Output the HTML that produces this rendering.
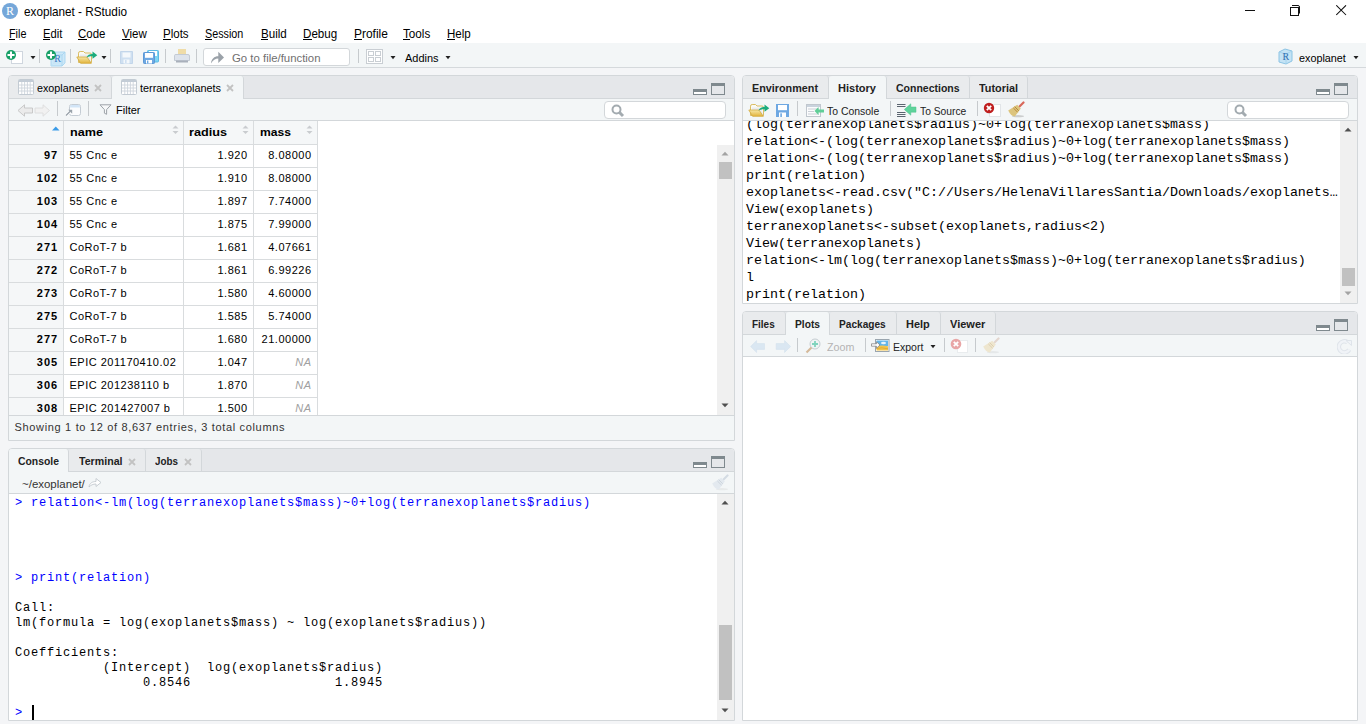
<!DOCTYPE html>
<html><head><meta charset="utf-8"><title>exoplanet - RStudio</title>
<style>
*{box-sizing:border-box}
html,body{margin:0;padding:0}
body{width:1366px;height:724px;position:relative;overflow:hidden;background:#f4f5f7;font-family:"Liberation Sans",sans-serif;font-size:12px;color:#000}
</style></head><body>

<div style="position:absolute;left:0px;top:0px;width:1366px;height:43px;background:#fff"></div>
<div style="position:absolute;left:2px;top:3px;width:16px;height:16px;background:#75a7d9;border-radius:50%"></div>
<div style="position:absolute;left:2px;top:3px;width:16px;height:16px;font-family:'Liberation Serif',serif;font-size:12px;line-height:16px;color:#fff;text-align:center">R</div>
<div style="position:absolute;top:2px;font-family:'Liberation Sans',sans-serif;font-size:13px;line-height:20px;white-space:pre;color:#000;left:24px;transform:scaleX(0.9021);transform-origin:left center;">exoplanet - RStudio</div>
<div style="position:absolute;left:1245px;top:10px;width:10px;height:1px;background:#111"></div>
<div style="position:absolute;left:1290px;top:7px;width:9px;height:9px;border:1px solid #111;width:9px;height:9px"></div>
<svg style="position:absolute;left:1292px;top:4px;" width="9" height="10" viewBox="0 0 9 10"><path d="M0 1.5H6Q7.5 1.5 7.5 3V9.5" fill="none" stroke="#111" stroke-width="1"/></svg>
<svg style="position:absolute;left:1336px;top:5px;" width="11" height="11" viewBox="0 0 11 11"><path d="M0.3 0.3L10 10M10 0.3L0.3 10" stroke="#111" stroke-width="1.05"/></svg>
<div style="position:absolute;top:24px;font-family:'Liberation Sans',sans-serif;font-size:12px;line-height:20px;white-space:pre;color:#000;left:8.6px;transform:scaleX(0.8999);transform-origin:left center;">File</div>
<div style="position:absolute;left:9px;top:39px;width:6px;height:1px;background:#000"></div>
<div style="position:absolute;top:24px;font-family:'Liberation Sans',sans-serif;font-size:12px;line-height:20px;white-space:pre;color:#000;left:42.6px;transform:scaleX(0.9382);transform-origin:left center;">Edit</div>
<div style="position:absolute;left:43px;top:39px;width:7px;height:1px;background:#000"></div>
<div style="position:absolute;top:24px;font-family:'Liberation Sans',sans-serif;font-size:12px;line-height:20px;white-space:pre;color:#000;left:78.3px;transform:scaleX(0.9551);transform-origin:left center;">Code</div>
<div style="position:absolute;left:78px;top:39px;width:9px;height:1px;background:#000"></div>
<div style="position:absolute;top:24px;font-family:'Liberation Sans',sans-serif;font-size:12px;line-height:20px;white-space:pre;color:#000;left:122.2px;transform:scaleX(0.9615);transform-origin:left center;">View</div>
<div style="position:absolute;left:122px;top:39px;width:8px;height:1px;background:#000"></div>
<div style="position:absolute;top:24px;font-family:'Liberation Sans',sans-serif;font-size:12px;line-height:20px;white-space:pre;color:#000;left:163.2px;transform:scaleX(0.9596);transform-origin:left center;">Plots</div>
<div style="position:absolute;left:163px;top:39px;width:8px;height:1px;background:#000"></div>
<div style="position:absolute;top:24px;font-family:'Liberation Sans',sans-serif;font-size:12px;line-height:20px;white-space:pre;color:#000;left:205px;transform:scaleX(0.8971);transform-origin:left center;">Session</div>
<div style="position:absolute;left:205px;top:39px;width:7px;height:1px;background:#000"></div>
<div style="position:absolute;top:24px;font-family:'Liberation Sans',sans-serif;font-size:12px;line-height:20px;white-space:pre;color:#000;left:260.6px;transform:scaleX(0.9669);transform-origin:left center;">Build</div>
<div style="position:absolute;left:261px;top:39px;width:7px;height:1px;background:#000"></div>
<div style="position:absolute;top:24px;font-family:'Liberation Sans',sans-serif;font-size:12px;line-height:20px;white-space:pre;color:#000;left:303.3px;transform:scaleX(0.9672);transform-origin:left center;">Debug</div>
<div style="position:absolute;left:303px;top:39px;width:9px;height:1px;background:#000"></div>
<div style="position:absolute;top:24px;font-family:'Liberation Sans',sans-serif;font-size:12px;line-height:20px;white-space:pre;color:#000;left:354px;transform:scaleX(0.9966);transform-origin:left center;">Profile</div>
<div style="position:absolute;left:354px;top:39px;width:8px;height:1px;background:#000"></div>
<div style="position:absolute;top:24px;font-family:'Liberation Sans',sans-serif;font-size:12px;line-height:20px;white-space:pre;color:#000;left:403.2px;transform:scaleX(0.9745);transform-origin:left center;">Tools</div>
<div style="position:absolute;left:403px;top:39px;width:7px;height:1px;background:#000"></div>
<div style="position:absolute;top:24px;font-family:'Liberation Sans',sans-serif;font-size:12px;line-height:20px;white-space:pre;color:#000;left:447px;transform:scaleX(0.9643);transform-origin:left center;">Help</div>
<div style="position:absolute;left:447px;top:39px;width:8px;height:1px;background:#000"></div>
<div style="position:absolute;left:0px;top:43px;width:1366px;height:25px;background:#f3f6f7;border-bottom:1px solid #d5d9dc"></div>
<div style="position:absolute;left:11px;top:51px;width:12px;height:13px;background:#fff;border:1px solid #cfd6de"></div>
<svg style="position:absolute;left:6px;top:50px;" width="10" height="10" viewBox="0 0 10 10"><circle cx="5" cy="5" r="5" fill="#17a067"/><path d="M4 1.5H6V4H8.5V6H6V8.5H4V6H1.5V4H4Z" fill="#fff"/></svg>
<svg style="position:absolute;left:30px;top:56px;" width="6" height="4" viewBox="0 0 6 4"><path d="M0.5 0H5.5L3 3.2Z" fill="#222"/></svg>
<div style="position:absolute;left:39px;top:49px;width:1px;height:14px;background:#c6cacd"></div>
<svg style="position:absolute;left:50px;top:51px;" width="16" height="16" viewBox="0 0 16 16"><path d="M1 4L4 1H15V12L12 15H1Z" fill="#cde8f8" stroke="#a6d5ef" stroke-width="0.9"/><path d="M1 4H12V15M12 4L15 1" fill="none" stroke="#a6d5ef" stroke-width="0.9"/><path d="M4 1V12H15M4 12L1 15" fill="none" stroke="#bfe2f5" stroke-width="0.6"/><text x="4.3" y="11.2" font-family="Liberation Serif" font-size="10" fill="#3a77c2">R</text></svg>
<svg style="position:absolute;left:46px;top:50px;" width="10" height="10" viewBox="0 0 10 10"><circle cx="5" cy="5" r="5" fill="#17a067"/><path d="M4 1.5H6V4H8.5V6H6V8.5H4V6H1.5V4H4Z" fill="#fff"/></svg>
<div style="position:absolute;left:70px;top:49px;width:1px;height:14px;background:#c6cacd"></div>
<svg style="position:absolute;left:76px;top:50px;" width="22" height="15" viewBox="0 0 22 15"><defs><linearGradient id="fg" x1="0" y1="0" x2="0" y2="1"><stop offset="0" stop-color="#f6e7a6"/><stop offset="1" stop-color="#e2b33b"/></linearGradient></defs><path d="M2.5 12.5V3.2Q2.5 1.5 4.2 1.5H7.5L9 3H14Q15.5 3 15.5 4.5V12.5Z" fill="#fbfaf3" stroke="#d6b652" stroke-width="0.9"/><path d="M4 4.5H13.5L15 12H4Z" fill="#e9ecef"/><path d="M0.8 7H11L15.3 13.3H4.6Z" fill="url(#fg)" stroke="#d3aa3c" stroke-width="0.8"/><path d="M10.5 7.5C11.5 5 13.5 4 16.5 4V1.5L21.3 5.2L16.5 8.8V6.3C14 6.3 12 6.8 10.5 7.5Z" fill="#1bab7b"/></svg>
<svg style="position:absolute;left:101px;top:56px;" width="6" height="4" viewBox="0 0 6 4"><path d="M0.5 0H5.5L3 3.2Z" fill="#222"/></svg>
<div style="position:absolute;left:110px;top:49px;width:1px;height:14px;background:#c6cacd"></div>
<svg style="position:absolute;left:120px;top:51px;" width="13" height="13" viewBox="0 0 13 13"><path d="M0.5 0.5H12.5V12.5H0.5Z" fill="#cfe0f1" stroke="#c3d6ea"/><rect x="2.5" y="1.5" width="8" height="5" fill="#f4f8fb"/><rect x="3.5" y="8.5" width="6" height="4" fill="#f4f8fb"/><rect x="5" y="9" width="1.6" height="3" fill="#cfe0f1"/></svg>
<svg style="position:absolute;left:143px;top:50px;" width="16" height="14" viewBox="0 0 16 14"><rect x="4.5" y="0.5" width="11" height="11.5" rx="0.8" fill="#7dd5f4" stroke="#5fb9e4"/><rect x="6" y="1" width="8" height="5" fill="#fff"/><rect x="0.5" y="2.5" width="11" height="11" rx="0.8" fill="#6ea8e2" stroke="#5c98d6"/><rect x="2" y="3" width="8" height="4.8" fill="#fff"/><rect x="3" y="10" width="6" height="3.5" fill="#fff"/><rect x="4" y="10.5" width="1.4" height="3" fill="#6ea8e2"/></svg>
<div style="position:absolute;left:165px;top:49px;width:1px;height:14px;background:#c6cacd"></div>
<svg style="position:absolute;left:173px;top:48px;" width="18" height="16" viewBox="0 0 18 16"><rect x="5" y="1" width="8" height="7" fill="#efdca8"/><path d="M1.5 7.5Q1.5 6.5 3 6.5H15Q16.5 6.5 16.5 8V12.5H1.5Z" fill="#dde3ec" stroke="#c3cad4"/><rect x="3" y="12.5" width="12" height="2" fill="#a9b0bb"/></svg>
<div style="position:absolute;left:196px;top:49px;width:1px;height:14px;background:#c6cacd"></div>
<div style="position:absolute;left:203px;top:48px;width:147px;height:18px;background:#fff;border:1px solid #d3d7da;border-radius:3px"></div>
<svg style="position:absolute;left:210px;top:51px;" width="15" height="13" viewBox="0 0 15 13"><path d="M1 12.5C1.3 8 4.3 5.3 8.3 5.3V0.8L14 6.4L8.3 12V7.6C5.3 7.6 3 9.3 1 12.5Z" fill="#9ba2a9"/></svg>
<div style="position:absolute;top:48px;font-family:'Liberation Sans',sans-serif;font-size:11px;line-height:20px;white-space:pre;color:#707070;left:232px;transform:scaleX(1.0338);transform-origin:left center;">Go to file/function</div>
<div style="position:absolute;left:358px;top:49px;width:1px;height:14px;background:#c6cacd"></div>
<svg style="position:absolute;left:366px;top:49px;" width="17" height="15" viewBox="0 0 17 15"><rect x="0.5" y="0.5" width="16" height="14" fill="#fff" stroke="#c9ced3"/><rect x="2.5" y="2.5" width="5" height="4" fill="none" stroke="#c9ced3"/><rect x="9.5" y="2.5" width="5" height="4" fill="none" stroke="#c9ced3"/><rect x="2.5" y="8.5" width="5" height="4" fill="none" stroke="#c9ced3"/><rect x="9.5" y="8.5" width="5" height="4" fill="none" stroke="#c9ced3"/></svg>
<svg style="position:absolute;left:390px;top:56px;" width="6" height="4" viewBox="0 0 6 4"><path d="M0.5 0H5.5L3 3.2Z" fill="#222"/></svg>
<div style="position:absolute;top:48px;font-family:'Liberation Sans',sans-serif;font-size:11px;line-height:20px;white-space:pre;color:#000;left:404.5px;transform:scaleX(0.9960);transform-origin:left center;">Addins</div>
<svg style="position:absolute;left:445px;top:56px;" width="6" height="4" viewBox="0 0 6 4"><path d="M0.5 0H5.5L3 3.2Z" fill="#222"/></svg>
<svg style="position:absolute;left:1277px;top:48px;" width="17" height="17" viewBox="0 0 17 17"><path d="M2 4L8 1L15 3V13L9 16L2 14Z" fill="#c4e3f5" stroke="#8cc4e4" stroke-width="1"/><path d="M2 4L9 6L15 3M9 6V16" fill="none" stroke="#9fd0ec" stroke-width="0.8"/><text x="5.5" y="12" font-family="Liberation Serif" font-size="10" fill="#2f6fb0">R</text></svg>
<div style="position:absolute;top:48px;font-family:'Liberation Sans',sans-serif;font-size:11px;line-height:20px;white-space:pre;color:#000;left:1298.6px;transform:scaleX(0.9810);transform-origin:left center;">exoplanet</div>
<svg style="position:absolute;left:1353px;top:56px;" width="6" height="4" viewBox="0 0 6 4"><path d="M0.5 0H5.5L3 3.2Z" fill="#222"/></svg>
<div style="position:absolute;left:8px;top:75px;width:727px;height:366px;background:#fff;border:1px solid #d3d7da;border-radius:4px 4px 0 0"></div>
<div style="position:absolute;left:9px;top:76px;width:725px;height:22px;background:#e5e7ea;border-radius:3px 3px 0 0"></div>
<div style="position:absolute;left:9px;top:98px;width:725px;height:1px;background:#d3d7da"></div>
<div style="position:absolute;left:9px;top:76px;width:103px;height:22px;background:#e9ebed;border-right:1px solid #d3d7da;border-radius:3px 3px 0 0"></div>
<div style="position:absolute;left:112px;top:76px;width:132px;height:23px;background:#f3f6f7;border-right:1px solid #d3d7da;border-radius:3px 3px 0 0"></div>
<svg style="position:absolute;left:18px;top:79px;" width="16" height="16" viewBox="0 0 16 16"><rect x="0.5" y="0.5" width="15" height="15" rx="1" fill="#fff" stroke="#c3cbd3"/><rect x="1" y="1" width="14" height="2" fill="#c3ccd6"/><path d="M3.8 3V15" stroke="#cdd4db" stroke-width="0.9"/><path d="M6.6 3V15" stroke="#cdd4db" stroke-width="0.9"/><path d="M9.4 3V15" stroke="#cdd4db" stroke-width="0.9"/><path d="M12.2 3V15" stroke="#cdd4db" stroke-width="0.9"/><path d="M1 6.0H15" stroke="#cdd4db" stroke-width="0.9"/><path d="M1 9.0H15" stroke="#cdd4db" stroke-width="0.9"/><path d="M1 12.0H15" stroke="#cdd4db" stroke-width="0.9"/></svg>
<div style="position:absolute;top:78px;font-family:'Liberation Sans',sans-serif;font-size:11px;line-height:20px;white-space:pre;color:#000;left:37px;transform:scaleX(0.9773);transform-origin:left center;">exoplanets</div>
<svg style="position:absolute;left:94px;top:84px;" width="8" height="8" viewBox="0 0 8 8"><path d="M1 1L7 7M7 1L1 7" stroke="#c2c2c2" stroke-width="1.8"/></svg>
<svg style="position:absolute;left:121px;top:79px;" width="16" height="16" viewBox="0 0 16 16"><rect x="0.5" y="0.5" width="15" height="15" rx="1" fill="#fff" stroke="#c3cbd3"/><rect x="1" y="1" width="14" height="2" fill="#c3ccd6"/><path d="M3.8 3V15" stroke="#cdd4db" stroke-width="0.9"/><path d="M6.6 3V15" stroke="#cdd4db" stroke-width="0.9"/><path d="M9.4 3V15" stroke="#cdd4db" stroke-width="0.9"/><path d="M12.2 3V15" stroke="#cdd4db" stroke-width="0.9"/><path d="M1 6.0H15" stroke="#cdd4db" stroke-width="0.9"/><path d="M1 9.0H15" stroke="#cdd4db" stroke-width="0.9"/><path d="M1 12.0H15" stroke="#cdd4db" stroke-width="0.9"/></svg>
<div style="position:absolute;top:78px;font-family:'Liberation Sans',sans-serif;font-size:11px;line-height:20px;white-space:pre;color:#000;left:140px;transform:scaleX(0.9885);transform-origin:left center;">terranexoplanets</div>
<svg style="position:absolute;left:226px;top:84px;" width="8" height="8" viewBox="0 0 8 8"><path d="M1 1L7 7M7 1L1 7" stroke="#c2c2c2" stroke-width="1.8"/></svg>
<svg style="position:absolute;left:693px;top:89px;" width="14" height="6" viewBox="0 0 14 6"><rect x="0.5" y="0.5" width="13" height="5" fill="#fff" stroke="#7f898e"/><path d="M0 3V1.2Q0 0 1.2 0H12.8Q14 0 14 1.2V3Z" fill="#7f898e"/></svg>
<svg style="position:absolute;left:711px;top:83px;" width="14" height="12" viewBox="0 0 14 12"><rect x="0.5" y="0.5" width="13" height="11" fill="none" stroke="#7f898e"/><path d="M0 3V1.2Q0 0 1.2 0H12.8Q14 0 14 1.2V3Z" fill="#7f898e"/></svg>
<div style="position:absolute;left:9px;top:99px;width:725px;height:21px;background:#f3f6f7"></div>
<div style="position:absolute;left:9px;top:120px;width:725px;height:1px;background:#d3d7da"></div>
<svg style="position:absolute;left:17px;top:104px;" width="34" height="13" viewBox="0 0 34 13"><path d="M1 6.5L7.5 0.8V4H15.5V9H7.5V12.2Z" fill="#ebebeb" stroke="#c4c4c4" stroke-width="0.9"/><path d="M32.5 6.5L26 0.8V4H18V9H26V12.2Z" fill="#f1f1f1" stroke="#dcdcdc" stroke-width="0.9"/></svg>
<div style="position:absolute;left:57px;top:101px;width:1px;height:15px;background:#c6cacd"></div>
<svg style="position:absolute;left:64px;top:103px;" width="18" height="14" viewBox="0 0 18 14"><rect x="5.5" y="1.5" width="11" height="11" rx="2" fill="#fbfcfd" stroke="#c4ccd4"/><path d="M6 4.5V3.5Q6 2 7.5 2H14.5Q16 2 16 3.5V4.5Z" fill="#d2e5f7"/><path d="M2 12.5L6.5 8" stroke="#fff" stroke-width="3"/><path d="M2 12.5L6.5 8" stroke="#9aa3ab" stroke-width="1.5"/><path d="M4.2 6.8H8.2V10.8Z" fill="#9aa3ab"/></svg>
<div style="position:absolute;left:88px;top:101px;width:1px;height:15px;background:#c6cacd"></div>
<svg style="position:absolute;left:99px;top:104px;" width="13" height="11" viewBox="0 0 13 11"><path d="M1 0.8H12L7.6 5.6V10.3L5.4 9.2V5.6Z" fill="#f7f8f9" stroke="#9da3a8" stroke-width="1" stroke-linejoin="round"/></svg>
<div style="position:absolute;top:100px;font-family:'Liberation Sans',sans-serif;font-size:11px;line-height:20px;white-space:pre;color:#000;left:115.5px;transform:scaleX(1.0023);transform-origin:left center;">Filter</div>
<div style="position:absolute;left:604px;top:101px;width:122px;height:18px;background:#fff;border:1px solid #d3d7da;border-radius:4px"></div>
<svg style="position:absolute;left:611px;top:104px;" width="14" height="14" viewBox="0 0 14 14"><circle cx="5.5" cy="5.5" r="4" fill="none" stroke="#a3abb0" stroke-width="2"/><path d="M8.3 8.3L12 12" stroke="#a3abb0" stroke-width="3"/></svg>
<div style="position:absolute;left:9px;top:121px;width:309px;height:23px;background:#f5f7f8"></div>
<div style="position:absolute;left:9px;top:144px;width:54px;height:271px;background:#f5f7f8"></div>
<div style="position:absolute;left:63px;top:121px;width:1px;height:294px;background:#d9dcde"></div>
<div style="position:absolute;left:183px;top:121px;width:1px;height:294px;background:#d9dcde"></div>
<div style="position:absolute;left:253px;top:121px;width:1px;height:294px;background:#d9dcde"></div>
<div style="position:absolute;left:317px;top:121px;width:1px;height:294px;background:#d9dcde"></div>
<div style="position:absolute;left:9px;top:144px;width:309px;height:1px;background:#d9dcde"></div>
<div style="position:absolute;left:9px;top:167px;width:309px;height:1px;background:#d9dcde"></div>
<div style="position:absolute;left:9px;top:190px;width:309px;height:1px;background:#d9dcde"></div>
<div style="position:absolute;left:9px;top:213px;width:309px;height:1px;background:#d9dcde"></div>
<div style="position:absolute;left:9px;top:236px;width:309px;height:1px;background:#d9dcde"></div>
<div style="position:absolute;left:9px;top:259px;width:309px;height:1px;background:#d9dcde"></div>
<div style="position:absolute;left:9px;top:282px;width:309px;height:1px;background:#d9dcde"></div>
<div style="position:absolute;left:9px;top:305px;width:309px;height:1px;background:#d9dcde"></div>
<div style="position:absolute;left:9px;top:328px;width:309px;height:1px;background:#d9dcde"></div>
<div style="position:absolute;left:9px;top:351px;width:309px;height:1px;background:#d9dcde"></div>
<div style="position:absolute;left:9px;top:374px;width:309px;height:1px;background:#d9dcde"></div>
<div style="position:absolute;left:9px;top:397px;width:309px;height:1px;background:#d9dcde"></div>
<svg style="position:absolute;left:52px;top:126px;" width="8" height="5" viewBox="0 0 8 5"><path d="M0 4.5H7.5L3.75 0.5Z" fill="#3a9be8"/></svg>
<svg style="position:absolute;left:172px;top:125px;" width="7" height="10" viewBox="0 0 7 10"><path d="M0.5 3.5H6.5L3.5 0.5Z" fill="#c9cccf"/><path d="M0.5 6H6.5L3.5 9Z" fill="#c9cccf"/></svg>
<svg style="position:absolute;left:242px;top:125px;" width="7" height="10" viewBox="0 0 7 10"><path d="M0.5 3.5H6.5L3.5 0.5Z" fill="#c9cccf"/><path d="M0.5 6H6.5L3.5 9Z" fill="#c9cccf"/></svg>
<svg style="position:absolute;left:306px;top:125px;" width="7" height="10" viewBox="0 0 7 10"><path d="M0.5 3.5H6.5L3.5 0.5Z" fill="#c9cccf"/><path d="M0.5 6H6.5L3.5 9Z" fill="#c9cccf"/></svg>
<div style="position:absolute;top:122px;font-family:'Liberation Sans',sans-serif;font-size:11.5px;line-height:20px;white-space:pre;color:#000;font-weight:bold;left:69.5px;transform:scaleX(1.0985);transform-origin:left center;">name</div>
<div style="position:absolute;top:122px;font-family:'Liberation Sans',sans-serif;font-size:11.5px;line-height:20px;white-space:pre;color:#000;font-weight:bold;left:189px;transform:scaleX(1.1011);transform-origin:left center;">radius</div>
<div style="position:absolute;top:122px;font-family:'Liberation Sans',sans-serif;font-size:11.5px;line-height:20px;white-space:pre;color:#000;font-weight:bold;left:259.5px;transform:scaleX(1.0540);transform-origin:left center;">mass</div>
<div style="position:absolute;top:145px;font-family:'Liberation Sans',sans-serif;font-size:11px;line-height:20px;white-space:pre;color:#000;font-weight:bold;letter-spacing:1.0px;right:1307.8px;">97</div>
<div style="position:absolute;top:145px;font-family:'Liberation Sans',sans-serif;font-size:11px;line-height:20px;white-space:pre;color:#000;letter-spacing:0.5px;left:69.5px;">55 Cnc e</div>
<div style="position:absolute;top:145px;font-family:'Liberation Sans',sans-serif;font-size:11px;line-height:20px;white-space:pre;color:#000;letter-spacing:0.5px;right:1118.5px;">1.920</div>
<div style="position:absolute;top:145px;font-family:'Liberation Sans',sans-serif;font-size:11px;line-height:20px;white-space:pre;color:#000;letter-spacing:0.5px;right:1054.5px;">8.08000</div>
<div style="position:absolute;top:168px;font-family:'Liberation Sans',sans-serif;font-size:11px;line-height:20px;white-space:pre;color:#000;font-weight:bold;letter-spacing:1.0px;right:1307.8px;">102</div>
<div style="position:absolute;top:168px;font-family:'Liberation Sans',sans-serif;font-size:11px;line-height:20px;white-space:pre;color:#000;letter-spacing:0.5px;left:69.5px;">55 Cnc e</div>
<div style="position:absolute;top:168px;font-family:'Liberation Sans',sans-serif;font-size:11px;line-height:20px;white-space:pre;color:#000;letter-spacing:0.5px;right:1118.5px;">1.910</div>
<div style="position:absolute;top:168px;font-family:'Liberation Sans',sans-serif;font-size:11px;line-height:20px;white-space:pre;color:#000;letter-spacing:0.5px;right:1054.5px;">8.08000</div>
<div style="position:absolute;top:191px;font-family:'Liberation Sans',sans-serif;font-size:11px;line-height:20px;white-space:pre;color:#000;font-weight:bold;letter-spacing:1.0px;right:1307.8px;">103</div>
<div style="position:absolute;top:191px;font-family:'Liberation Sans',sans-serif;font-size:11px;line-height:20px;white-space:pre;color:#000;letter-spacing:0.5px;left:69.5px;">55 Cnc e</div>
<div style="position:absolute;top:191px;font-family:'Liberation Sans',sans-serif;font-size:11px;line-height:20px;white-space:pre;color:#000;letter-spacing:0.5px;right:1118.5px;">1.897</div>
<div style="position:absolute;top:191px;font-family:'Liberation Sans',sans-serif;font-size:11px;line-height:20px;white-space:pre;color:#000;letter-spacing:0.5px;right:1054.5px;">7.74000</div>
<div style="position:absolute;top:214px;font-family:'Liberation Sans',sans-serif;font-size:11px;line-height:20px;white-space:pre;color:#000;font-weight:bold;letter-spacing:1.0px;right:1307.8px;">104</div>
<div style="position:absolute;top:214px;font-family:'Liberation Sans',sans-serif;font-size:11px;line-height:20px;white-space:pre;color:#000;letter-spacing:0.5px;left:69.5px;">55 Cnc e</div>
<div style="position:absolute;top:214px;font-family:'Liberation Sans',sans-serif;font-size:11px;line-height:20px;white-space:pre;color:#000;letter-spacing:0.5px;right:1118.5px;">1.875</div>
<div style="position:absolute;top:214px;font-family:'Liberation Sans',sans-serif;font-size:11px;line-height:20px;white-space:pre;color:#000;letter-spacing:0.5px;right:1054.5px;">7.99000</div>
<div style="position:absolute;top:237px;font-family:'Liberation Sans',sans-serif;font-size:11px;line-height:20px;white-space:pre;color:#000;font-weight:bold;letter-spacing:1.0px;right:1307.8px;">271</div>
<div style="position:absolute;top:237px;font-family:'Liberation Sans',sans-serif;font-size:11px;line-height:20px;white-space:pre;color:#000;letter-spacing:0.5px;left:69.5px;">CoRoT-7 b</div>
<div style="position:absolute;top:237px;font-family:'Liberation Sans',sans-serif;font-size:11px;line-height:20px;white-space:pre;color:#000;letter-spacing:0.5px;right:1118.5px;">1.681</div>
<div style="position:absolute;top:237px;font-family:'Liberation Sans',sans-serif;font-size:11px;line-height:20px;white-space:pre;color:#000;letter-spacing:0.5px;right:1054.5px;">4.07661</div>
<div style="position:absolute;top:260px;font-family:'Liberation Sans',sans-serif;font-size:11px;line-height:20px;white-space:pre;color:#000;font-weight:bold;letter-spacing:1.0px;right:1307.8px;">272</div>
<div style="position:absolute;top:260px;font-family:'Liberation Sans',sans-serif;font-size:11px;line-height:20px;white-space:pre;color:#000;letter-spacing:0.5px;left:69.5px;">CoRoT-7 b</div>
<div style="position:absolute;top:260px;font-family:'Liberation Sans',sans-serif;font-size:11px;line-height:20px;white-space:pre;color:#000;letter-spacing:0.5px;right:1118.5px;">1.861</div>
<div style="position:absolute;top:260px;font-family:'Liberation Sans',sans-serif;font-size:11px;line-height:20px;white-space:pre;color:#000;letter-spacing:0.5px;right:1054.5px;">6.99226</div>
<div style="position:absolute;top:283px;font-family:'Liberation Sans',sans-serif;font-size:11px;line-height:20px;white-space:pre;color:#000;font-weight:bold;letter-spacing:1.0px;right:1307.8px;">273</div>
<div style="position:absolute;top:283px;font-family:'Liberation Sans',sans-serif;font-size:11px;line-height:20px;white-space:pre;color:#000;letter-spacing:0.5px;left:69.5px;">CoRoT-7 b</div>
<div style="position:absolute;top:283px;font-family:'Liberation Sans',sans-serif;font-size:11px;line-height:20px;white-space:pre;color:#000;letter-spacing:0.5px;right:1118.5px;">1.580</div>
<div style="position:absolute;top:283px;font-family:'Liberation Sans',sans-serif;font-size:11px;line-height:20px;white-space:pre;color:#000;letter-spacing:0.5px;right:1054.5px;">4.60000</div>
<div style="position:absolute;top:306px;font-family:'Liberation Sans',sans-serif;font-size:11px;line-height:20px;white-space:pre;color:#000;font-weight:bold;letter-spacing:1.0px;right:1307.8px;">275</div>
<div style="position:absolute;top:306px;font-family:'Liberation Sans',sans-serif;font-size:11px;line-height:20px;white-space:pre;color:#000;letter-spacing:0.5px;left:69.5px;">CoRoT-7 b</div>
<div style="position:absolute;top:306px;font-family:'Liberation Sans',sans-serif;font-size:11px;line-height:20px;white-space:pre;color:#000;letter-spacing:0.5px;right:1118.5px;">1.585</div>
<div style="position:absolute;top:306px;font-family:'Liberation Sans',sans-serif;font-size:11px;line-height:20px;white-space:pre;color:#000;letter-spacing:0.5px;right:1054.5px;">5.74000</div>
<div style="position:absolute;top:329px;font-family:'Liberation Sans',sans-serif;font-size:11px;line-height:20px;white-space:pre;color:#000;font-weight:bold;letter-spacing:1.0px;right:1307.8px;">277</div>
<div style="position:absolute;top:329px;font-family:'Liberation Sans',sans-serif;font-size:11px;line-height:20px;white-space:pre;color:#000;letter-spacing:0.5px;left:69.5px;">CoRoT-7 b</div>
<div style="position:absolute;top:329px;font-family:'Liberation Sans',sans-serif;font-size:11px;line-height:20px;white-space:pre;color:#000;letter-spacing:0.5px;right:1118.5px;">1.680</div>
<div style="position:absolute;top:329px;font-family:'Liberation Sans',sans-serif;font-size:11px;line-height:20px;white-space:pre;color:#000;letter-spacing:0.5px;right:1054.5px;">21.00000</div>
<div style="position:absolute;top:352px;font-family:'Liberation Sans',sans-serif;font-size:11px;line-height:20px;white-space:pre;color:#000;font-weight:bold;letter-spacing:1.0px;right:1307.8px;">305</div>
<div style="position:absolute;top:352px;font-family:'Liberation Sans',sans-serif;font-size:11px;line-height:20px;white-space:pre;color:#000;letter-spacing:0.5px;left:69.5px;">EPIC 201170410.02</div>
<div style="position:absolute;top:352px;font-family:'Liberation Sans',sans-serif;font-size:11px;line-height:20px;white-space:pre;color:#000;letter-spacing:0.5px;right:1118.5px;">1.047</div>
<div style="position:absolute;top:352px;font-family:'Liberation Sans',sans-serif;font-size:11px;line-height:20px;white-space:pre;color:#a0a0a0;font-style:italic;letter-spacing:0.5px;right:1054.5px;">NA</div>
<div style="position:absolute;top:375px;font-family:'Liberation Sans',sans-serif;font-size:11px;line-height:20px;white-space:pre;color:#000;font-weight:bold;letter-spacing:1.0px;right:1307.8px;">306</div>
<div style="position:absolute;top:375px;font-family:'Liberation Sans',sans-serif;font-size:11px;line-height:20px;white-space:pre;color:#000;letter-spacing:0.5px;left:69.5px;">EPIC 201238110 b</div>
<div style="position:absolute;top:375px;font-family:'Liberation Sans',sans-serif;font-size:11px;line-height:20px;white-space:pre;color:#000;letter-spacing:0.5px;right:1118.5px;">1.870</div>
<div style="position:absolute;top:375px;font-family:'Liberation Sans',sans-serif;font-size:11px;line-height:20px;white-space:pre;color:#a0a0a0;font-style:italic;letter-spacing:0.5px;right:1054.5px;">NA</div>
<div style="position:absolute;top:398px;font-family:'Liberation Sans',sans-serif;font-size:11px;line-height:20px;white-space:pre;color:#000;font-weight:bold;letter-spacing:1.0px;right:1307.8px;">308</div>
<div style="position:absolute;top:398px;font-family:'Liberation Sans',sans-serif;font-size:11px;line-height:20px;white-space:pre;color:#000;letter-spacing:0.5px;left:69.5px;">EPIC 201427007 b</div>
<div style="position:absolute;top:398px;font-family:'Liberation Sans',sans-serif;font-size:11px;line-height:20px;white-space:pre;color:#000;letter-spacing:0.5px;right:1118.5px;">1.500</div>
<div style="position:absolute;top:398px;font-family:'Liberation Sans',sans-serif;font-size:11px;line-height:20px;white-space:pre;color:#a0a0a0;font-style:italic;letter-spacing:0.5px;right:1054.5px;">NA</div>
<div style="position:absolute;left:717px;top:145px;width:17px;height:270px;background:#f0f0f0"></div>
<svg style="position:absolute;left:721px;top:151px;" width="8" height="5" viewBox="0 0 8 5"><path d="M0.5 4.5H7.5L4 0.8Z" fill="#a3a3a3"/></svg>
<svg style="position:absolute;left:721px;top:403px;" width="8" height="5" viewBox="0 0 8 5"><path d="M0.5 0.5H7.5L4 4.2Z" fill="#505050"/></svg>
<div style="position:absolute;left:719px;top:162px;width:13px;height:17px;background:#c1c1c1"></div>
<div style="position:absolute;left:9px;top:415px;width:725px;height:1px;background:#d3d7da"></div>
<div style="position:absolute;left:9px;top:416px;width:725px;height:24px;background:#f3f6f7"></div>
<div style="position:absolute;top:417px;font-family:'Liberation Sans',sans-serif;font-size:11px;line-height:20px;white-space:pre;color:#333;letter-spacing:0.67px;left:14.5px;">Showing 1 to 12 of 8,637 entries, 3 total columns</div>
<div style="position:absolute;left:8px;top:448px;width:727px;height:273px;background:#fff;border:1px solid #d3d7da;border-radius:4px 4px 0 0"></div>
<div style="position:absolute;left:9px;top:449px;width:725px;height:22px;background:#e5e7ea;border-radius:3px 3px 0 0"></div>
<div style="position:absolute;left:9px;top:471px;width:725px;height:1px;background:#d3d7da"></div>
<div style="position:absolute;left:9px;top:449px;width:60px;height:23px;background:#f3f6f7;border-right:1px solid #d3d7da;border-radius:3px 3px 0 0"></div>
<div style="position:absolute;left:69px;top:449px;width:77px;height:22px;background:#e9ebed;border-right:1px solid #d3d7da;border-radius:3px 3px 0 0"></div>
<div style="position:absolute;left:146px;top:449px;width:56px;height:22px;background:#e9ebed;border-right:1px solid #d3d7da;border-radius:3px 3px 0 0"></div>
<div style="position:absolute;top:451px;font-family:'Liberation Sans',sans-serif;font-size:11px;line-height:20px;white-space:pre;color:#222;font-weight:bold;left:18px;transform:scaleX(0.9448);transform-origin:left center;">Console</div>
<div style="position:absolute;top:451px;font-family:'Liberation Sans',sans-serif;font-size:11px;line-height:20px;white-space:pre;color:#222;font-weight:bold;left:79px;transform:scaleX(0.9660);transform-origin:left center;">Terminal</div>
<svg style="position:absolute;left:128px;top:458px;" width="8" height="8" viewBox="0 0 8 8"><path d="M1 1L7 7M7 1L1 7" stroke="#c2c2c2" stroke-width="1.8"/></svg>
<div style="position:absolute;top:451px;font-family:'Liberation Sans',sans-serif;font-size:11px;line-height:20px;white-space:pre;color:#222;font-weight:bold;left:155px;transform:scaleX(0.8958);transform-origin:left center;">Jobs</div>
<svg style="position:absolute;left:184px;top:458px;" width="8" height="8" viewBox="0 0 8 8"><path d="M1 1L7 7M7 1L1 7" stroke="#c2c2c2" stroke-width="1.8"/></svg>
<svg style="position:absolute;left:693px;top:462px;" width="14" height="6" viewBox="0 0 14 6"><rect x="0.5" y="0.5" width="13" height="5" fill="#fff" stroke="#7f898e"/><path d="M0 3V1.2Q0 0 1.2 0H12.8Q14 0 14 1.2V3Z" fill="#7f898e"/></svg>
<svg style="position:absolute;left:711px;top:456px;" width="14" height="12" viewBox="0 0 14 12"><rect x="0.5" y="0.5" width="13" height="11" fill="none" stroke="#7f898e"/><path d="M0 3V1.2Q0 0 1.2 0H12.8Q14 0 14 1.2V3Z" fill="#7f898e"/></svg>
<div style="position:absolute;left:9px;top:472px;width:725px;height:21px;background:#f3f6f7"></div>
<div style="position:absolute;left:9px;top:493px;width:725px;height:1px;background:#d3d7da"></div>
<div style="position:absolute;top:474px;font-family:'Liberation Sans',sans-serif;font-size:11px;line-height:20px;white-space:pre;color:#333;left:21.7px;transform:scaleX(1.0425);transform-origin:left center;">~/exoplanet/</div>
<svg style="position:absolute;left:88px;top:477px;" width="14" height="11" viewBox="0 0 14 11"><path d="M1 10C1.5 6 4.5 4.5 8 4.5V1.5L13 5.5L8 9.5V7C5 7 3 8 1 10Z" fill="#fff" stroke="#c8ced3" stroke-width="1"/></svg>
<svg style="position:absolute;left:711px;top:474px;" width="18" height="17" viewBox="0 0 18 17"><ellipse cx="11" cy="15.2" rx="6" ry="1.1" fill="#808080" opacity="0.10"/><path d="M16.5 1.5L12.5 5.5" stroke="#d3dbe3" stroke-width="2.2" stroke-linecap="round"/><path d="M10.2 3.8L13.8 7.4L7.8 15.6Q4 15.4 1.2 9.6Z" fill="#e3e9ef"/><path d="M7.6 5.6L11.8 9.8M6.4 7L10.6 11.2" stroke="#cdd5dd" stroke-width="1"/></svg>
<div style="position:absolute;left:717px;top:494px;width:17px;height:226px;background:#f0f0f0"></div>
<svg style="position:absolute;left:721px;top:500px;" width="8" height="5" viewBox="0 0 8 5"><path d="M0.5 4.5H7.5L4 0.8Z" fill="#505050"/></svg>
<svg style="position:absolute;left:721px;top:708px;" width="8" height="5" viewBox="0 0 8 5"><path d="M0.5 0.5H7.5L4 4.2Z" fill="#505050"/></svg>
<div style="position:absolute;left:719px;top:625px;width:13px;height:75px;background:#c1c1c1"></div>
<div style="position:absolute;top:493px;font-family:'Liberation Mono',monospace;font-size:12px;line-height:20px;white-space:pre;color:#0000ff;letter-spacing:0.8px;left:15px;">&gt; relation&lt;-lm(log(terranexoplanets$mass)~0+log(terranexoplanets$radius)</div>
<div style="position:absolute;top:568px;font-family:'Liberation Mono',monospace;font-size:12px;line-height:20px;white-space:pre;color:#0000ff;letter-spacing:0.8px;left:15px;">&gt; print(relation)</div>
<div style="position:absolute;top:598px;font-family:'Liberation Mono',monospace;font-size:12px;line-height:20px;white-space:pre;color:#000;letter-spacing:0.8px;left:15px;">Call:</div>
<div style="position:absolute;top:613px;font-family:'Liberation Mono',monospace;font-size:12px;line-height:20px;white-space:pre;color:#000;letter-spacing:0.8px;left:15px;">lm(formula = log(exoplanets$mass) ~ log(exoplanets$radius))</div>
<div style="position:absolute;top:643px;font-family:'Liberation Mono',monospace;font-size:12px;line-height:20px;white-space:pre;color:#000;letter-spacing:0.8px;left:15px;">Coefficients:</div>
<div style="position:absolute;top:658px;font-family:'Liberation Mono',monospace;font-size:12px;line-height:20px;white-space:pre;color:#000;letter-spacing:0.8px;left:15px;">           (Intercept)  log(exoplanets$radius)</div>
<div style="position:absolute;top:673px;font-family:'Liberation Mono',monospace;font-size:12px;line-height:20px;white-space:pre;color:#000;letter-spacing:0.8px;left:15px;">                0.8546                  1.8945</div>
<div style="position:absolute;top:703px;font-family:'Liberation Mono',monospace;font-size:12px;line-height:20px;white-space:pre;color:#0000ff;left:15px;">&gt;</div>
<div style="position:absolute;left:32px;top:705px;width:2px;height:15px;background:#000"></div>
<div style="position:absolute;left:742px;top:75px;width:616px;height:229px;background:#fff;border:1px solid #d3d7da;border-radius:4px 4px 0 0"></div>
<div style="position:absolute;left:743px;top:76px;width:614px;height:22px;background:#e5e7ea;border-radius:3px 3px 0 0"></div>
<div style="position:absolute;left:743px;top:98px;width:614px;height:1px;background:#d3d7da"></div>
<div style="position:absolute;left:743px;top:76px;width:86px;height:22px;background:#e9ebed;border-right:1px solid #d3d7da;border-radius:3px 3px 0 0"></div>
<div style="position:absolute;left:829px;top:76px;width:58px;height:23px;background:#f3f6f7;border-right:1px solid #d3d7da;border-radius:3px 3px 0 0"></div>
<div style="position:absolute;left:887px;top:76px;width:83px;height:22px;background:#e9ebed;border-right:1px solid #d3d7da;border-radius:3px 3px 0 0"></div>
<div style="position:absolute;left:970px;top:76px;width:58px;height:22px;background:#e9ebed;border-right:1px solid #d3d7da;border-radius:3px 3px 0 0"></div>
<div style="position:absolute;top:78px;font-family:'Liberation Sans',sans-serif;font-size:11px;line-height:20px;white-space:pre;color:#222;font-weight:bold;left:752px;transform:scaleX(0.9817);transform-origin:left center;">Environment</div>
<div style="position:absolute;top:78px;font-family:'Liberation Sans',sans-serif;font-size:11px;line-height:20px;white-space:pre;color:#222;font-weight:bold;left:838px;transform:scaleX(1.0027);transform-origin:left center;">History</div>
<div style="position:absolute;top:78px;font-family:'Liberation Sans',sans-serif;font-size:11px;line-height:20px;white-space:pre;color:#222;font-weight:bold;left:896px;transform:scaleX(0.9548);transform-origin:left center;">Connections</div>
<div style="position:absolute;top:78px;font-family:'Liberation Sans',sans-serif;font-size:11px;line-height:20px;white-space:pre;color:#222;font-weight:bold;left:979.4px;transform:scaleX(0.9895);transform-origin:left center;">Tutorial</div>
<svg style="position:absolute;left:1316px;top:89px;" width="14" height="6" viewBox="0 0 14 6"><rect x="0.5" y="0.5" width="13" height="5" fill="#fff" stroke="#7f898e"/><path d="M0 3V1.2Q0 0 1.2 0H12.8Q14 0 14 1.2V3Z" fill="#7f898e"/></svg>
<svg style="position:absolute;left:1334px;top:83px;" width="14" height="12" viewBox="0 0 14 12"><rect x="0.5" y="0.5" width="13" height="11" fill="none" stroke="#7f898e"/><path d="M0 3V1.2Q0 0 1.2 0H12.8Q14 0 14 1.2V3Z" fill="#7f898e"/></svg>
<div style="position:absolute;left:743px;top:99px;width:614px;height:21px;background:#f3f6f7"></div>
<div style="position:absolute;left:743px;top:120px;width:614px;height:1px;background:#d3d7da"></div>
<svg style="position:absolute;left:748px;top:103px;" width="22" height="15" viewBox="0 0 22 15"><defs><linearGradient id="fg" x1="0" y1="0" x2="0" y2="1"><stop offset="0" stop-color="#f6e7a6"/><stop offset="1" stop-color="#e2b33b"/></linearGradient></defs><path d="M2.5 12.5V3.2Q2.5 1.5 4.2 1.5H7.5L9 3H14Q15.5 3 15.5 4.5V12.5Z" fill="#fbfaf3" stroke="#d6b652" stroke-width="0.9"/><path d="M4 4.5H13.5L15 12H4Z" fill="#e9ecef"/><path d="M0.8 7H11L15.3 13.3H4.6Z" fill="url(#fg)" stroke="#d3aa3c" stroke-width="0.8"/><path d="M10.5 7.5C11.5 5 13.5 4 16.5 4V1.5L21.3 5.2L16.5 8.8V6.3C14 6.3 12 6.8 10.5 7.5Z" fill="#1bab7b"/></svg>
<svg style="position:absolute;left:776px;top:104px;" width="13" height="13" viewBox="0 0 13 13"><path d="M0 0H13V13H0Z" fill="#6ea8e2"/><rect x="2" y="1" width="9" height="5.2" fill="#fff"/><rect x="3" y="8.5" width="7" height="4.5" fill="#fff"/><rect x="4.3" y="9.3" width="1.6" height="3.7" fill="#6ea8e2"/></svg>
<div style="position:absolute;left:797px;top:101px;width:1px;height:15px;background:#c6cacd"></div>
<svg style="position:absolute;left:806px;top:104px;" width="19" height="13" viewBox="0 0 19 13"><rect x="0.5" y="0.5" width="14" height="12" fill="#fbfcfd" stroke="#c0c7ce"/><rect x="1" y="1" width="13" height="2" fill="#c9d3dd"/><path d="M2 5H13M2 7.5H8M2 10H13" stroke="#c3cad1" stroke-width="0.9"/><path d="M8.5 7L12.5 3V5.5H18V8.5H12.5V11Z" fill="#5fce97"/></svg>
<div style="position:absolute;top:101px;font-family:'Liberation Sans',sans-serif;font-size:11px;line-height:20px;white-space:pre;color:#222;left:826.8px;transform:scaleX(0.9485);transform-origin:left center;">To Console</div>
<div style="position:absolute;left:890px;top:101px;width:1px;height:15px;background:#c6cacd"></div>
<svg style="position:absolute;left:896px;top:103px;" width="21" height="15" viewBox="0 0 21 15"><path d="M1 1.5H9.5M1 3.5H9.5M1 9.5H9.5M1 11.5H9.5M1 13.5H9.5" stroke="#5b6570" stroke-width="1"/><path d="M8.3 6.5L14.8 0.8V4H20V9.2H14.8V12.2Z" fill="#5ed39b" stroke="#4cc08a" stroke-width="0.5"/></svg>
<div style="position:absolute;top:101px;font-family:'Liberation Sans',sans-serif;font-size:11px;line-height:20px;white-space:pre;color:#222;left:919.7px;transform:scaleX(0.9348);transform-origin:left center;">To Source</div>
<div style="position:absolute;left:977px;top:101px;width:1px;height:15px;background:#c6cacd"></div>
<div style="position:absolute;left:989px;top:104px;width:12px;height:13px;background:#fff;border:1px solid #e1e5e8"></div>
<svg style="position:absolute;left:983px;top:102px;" width="12" height="12" viewBox="0 0 12 12"><circle cx="6" cy="6" r="5.2" fill="#bf1f1f"/><path d="M3.8 3.8L8.2 8.2M8.2 3.8L3.8 8.2" stroke="#fff" stroke-width="1.8"/></svg>
<svg style="position:absolute;left:1007px;top:101px;" width="18" height="17" viewBox="0 0 18 17"><ellipse cx="11" cy="15.2" rx="6" ry="1.1" fill="#808080" opacity="0.35"/><path d="M16.5 1.5L12.5 5.5" stroke="#d8685a" stroke-width="2.2" stroke-linecap="round"/><path d="M10.2 3.8L13.8 7.4L7.8 15.6Q4 15.4 1.2 9.6Z" fill="#dcc47d"/><path d="M7.6 5.6L11.8 9.8M6.4 7L10.6 11.2" stroke="#b5893b" stroke-width="1"/></svg>
<div style="position:absolute;left:1227px;top:101px;width:122px;height:18px;background:#fff;border:1px solid #d3d7da;border-radius:4px"></div>
<svg style="position:absolute;left:1234px;top:104px;" width="14" height="14" viewBox="0 0 14 14"><circle cx="5.5" cy="5.5" r="4" fill="none" stroke="#a3abb0" stroke-width="2"/><path d="M8.3 8.3L12 12" stroke="#a3abb0" stroke-width="3"/></svg>
<div style="position:absolute;left:1340px;top:121px;width:17px;height:182px;background:#f0f0f0"></div>
<svg style="position:absolute;left:1344px;top:127px;" width="8" height="5" viewBox="0 0 8 5"><path d="M0.5 4.5H7.5L4 0.8Z" fill="#505050"/></svg>
<svg style="position:absolute;left:1344px;top:291px;" width="8" height="5" viewBox="0 0 8 5"><path d="M0.5 0.5H7.5L4 4.2Z" fill="#a3a3a3"/></svg>
<div style="position:absolute;left:1342px;top:268px;width:13px;height:18px;background:#c1c1c1"></div>
<div style="position:absolute;left:743px;top:121px;width:597px;height:182px;overflow:hidden">
<div style="position:absolute;left:3px;top:-6px;font-family:'Liberation Mono',monospace;font-size:13.33px;line-height:20px;white-space:pre;color:#000">(log(terranexoplanets$radius)~0+log(terranexoplanets$mass)</div>
<div style="position:absolute;left:3px;top:11px;font-family:'Liberation Mono',monospace;font-size:13.33px;line-height:20px;white-space:pre;color:#000">relation&lt;-(log(terranexoplanets$radius)~0+log(terranexoplanets$mass)</div>
<div style="position:absolute;left:3px;top:28px;font-family:'Liberation Mono',monospace;font-size:13.33px;line-height:20px;white-space:pre;color:#000">relation&lt;-(log(terranexoplanets$radius)~0+log(terranexoplanets$mass)</div>
<div style="position:absolute;left:3px;top:45px;font-family:'Liberation Mono',monospace;font-size:13.33px;line-height:20px;white-space:pre;color:#000">print(relation)</div>
<div style="position:absolute;left:3px;top:62px;font-family:'Liberation Mono',monospace;font-size:13.33px;line-height:20px;white-space:pre;color:#000">exoplanets&lt;-read.csv(&quot;C://Users/HelenaVillaresSantia/Downloads/exoplanets…</div>
<div style="position:absolute;left:3px;top:79px;font-family:'Liberation Mono',monospace;font-size:13.33px;line-height:20px;white-space:pre;color:#000">View(exoplanets)</div>
<div style="position:absolute;left:3px;top:96px;font-family:'Liberation Mono',monospace;font-size:13.33px;line-height:20px;white-space:pre;color:#000">terranexoplanets&lt;-subset(exoplanets,radius&lt;2)</div>
<div style="position:absolute;left:3px;top:113px;font-family:'Liberation Mono',monospace;font-size:13.33px;line-height:20px;white-space:pre;color:#000">View(terranexoplanets)</div>
<div style="position:absolute;left:3px;top:130px;font-family:'Liberation Mono',monospace;font-size:13.33px;line-height:20px;white-space:pre;color:#000">relation&lt;-lm(log(terranexoplanets$mass)~0+log(terranexoplanets$radius)</div>
<div style="position:absolute;left:3px;top:147px;font-family:'Liberation Mono',monospace;font-size:13.33px;line-height:20px;white-space:pre;color:#000">l</div>
<div style="position:absolute;left:3px;top:164px;font-family:'Liberation Mono',monospace;font-size:13.33px;line-height:20px;white-space:pre;color:#000">print(relation)</div>
</div>
<div style="position:absolute;left:742px;top:311px;width:616px;height:410px;background:#fff;border:1px solid #d3d7da;border-radius:4px 4px 0 0"></div>
<div style="position:absolute;left:743px;top:312px;width:614px;height:22px;background:#e5e7ea;border-radius:3px 3px 0 0"></div>
<div style="position:absolute;left:743px;top:334px;width:614px;height:1px;background:#d3d7da"></div>
<div style="position:absolute;left:743px;top:312px;width:43px;height:22px;background:#e9ebed;border-right:1px solid #d3d7da;border-radius:3px 3px 0 0"></div>
<div style="position:absolute;left:786px;top:312px;width:44px;height:23px;background:#f3f6f7;border-right:1px solid #d3d7da;border-radius:3px 3px 0 0"></div>
<div style="position:absolute;left:830px;top:312px;width:67px;height:22px;background:#e9ebed;border-right:1px solid #d3d7da;border-radius:3px 3px 0 0"></div>
<div style="position:absolute;left:897px;top:312px;width:44px;height:22px;background:#e9ebed;border-right:1px solid #d3d7da;border-radius:3px 3px 0 0"></div>
<div style="position:absolute;left:941px;top:312px;width:55px;height:22px;background:#e9ebed;border-right:1px solid #d3d7da;border-radius:3px 3px 0 0"></div>
<div style="position:absolute;top:314px;font-family:'Liberation Sans',sans-serif;font-size:11px;line-height:20px;white-space:pre;color:#222;font-weight:bold;left:752px;transform:scaleX(0.9056);transform-origin:left center;">Files</div>
<div style="position:absolute;top:314px;font-family:'Liberation Sans',sans-serif;font-size:11px;line-height:20px;white-space:pre;color:#222;font-weight:bold;left:794.5px;transform:scaleX(0.9296);transform-origin:left center;">Plots</div>
<div style="position:absolute;top:314px;font-family:'Liberation Sans',sans-serif;font-size:11px;line-height:20px;white-space:pre;color:#222;font-weight:bold;left:839.3px;transform:scaleX(0.9200);transform-origin:left center;">Packages</div>
<div style="position:absolute;top:314px;font-family:'Liberation Sans',sans-serif;font-size:11px;line-height:20px;white-space:pre;color:#222;font-weight:bold;left:906.3px;transform:scaleX(0.9943);transform-origin:left center;">Help</div>
<div style="position:absolute;top:314px;font-family:'Liberation Sans',sans-serif;font-size:11px;line-height:20px;white-space:pre;color:#222;font-weight:bold;left:949.7px;transform:scaleX(1.0009);transform-origin:left center;">Viewer</div>
<svg style="position:absolute;left:1316px;top:325px;" width="14" height="6" viewBox="0 0 14 6"><rect x="0.5" y="0.5" width="13" height="5" fill="#fff" stroke="#7f898e"/><path d="M0 3V1.2Q0 0 1.2 0H12.8Q14 0 14 1.2V3Z" fill="#7f898e"/></svg>
<svg style="position:absolute;left:1334px;top:319px;" width="14" height="12" viewBox="0 0 14 12"><rect x="0.5" y="0.5" width="13" height="11" fill="none" stroke="#7f898e"/><path d="M0 3V1.2Q0 0 1.2 0H12.8Q14 0 14 1.2V3Z" fill="#7f898e"/></svg>
<div style="position:absolute;left:743px;top:335px;width:614px;height:21px;background:#f3f6f7"></div>
<div style="position:absolute;left:743px;top:356px;width:614px;height:1px;background:#d3d7da"></div>
<svg style="position:absolute;left:750px;top:340px;" width="42" height="13" viewBox="0 0 42 13"><path d="M0.6 6.5L6.6 0.6V3.6H14.5V9.4H6.6V12.4Z" fill="#dae7f2" stroke="#d3e1ec" stroke-width="0.6"/><path d="M40.6 6.5L34.6 0.6V3.6H26.2V9.4H34.6V12.4Z" fill="#dae7f2" stroke="#d3e1ec" stroke-width="0.6"/></svg>
<div style="position:absolute;left:797px;top:338px;width:1px;height:14px;background:#c6cacd"></div>
<svg style="position:absolute;left:805px;top:338px;" width="16" height="16" viewBox="0 0 16 16"><circle cx="10" cy="6" r="5" fill="#eef4f4" stroke="#c6cdd2" stroke-width="1"/><path d="M10 3V9M7 6H13" stroke="#7fd3bd" stroke-width="1.8"/><path d="M6.5 9.5L1.5 14.5" stroke="#d4b99a" stroke-width="2.2"/></svg>
<div style="position:absolute;top:337px;font-family:'Liberation Sans',sans-serif;font-size:11px;line-height:20px;white-space:pre;color:#b3b3b3;left:826.5px;transform:scaleX(0.9709);transform-origin:left center;">Zoom</div>
<div style="position:absolute;left:865px;top:338px;width:1px;height:14px;background:#c6cacd"></div>
<svg style="position:absolute;left:871px;top:339px;" width="19" height="13" viewBox="0 0 19 13"><rect x="4.5" y="0.5" width="13.5" height="12" fill="#fff" stroke="#9aa5ae"/><rect x="5.5" y="1.5" width="11.5" height="5.5" fill="#62b5ea"/><ellipse cx="12.5" cy="4" rx="2.5" ry="1.2" fill="#e6f4fc"/><path d="M5.5 7.5Q10 5.5 17 7.2V11.5H5.5Z" fill="#f1c44c"/><path d="M5.5 9.5Q10 8 17 9.8" fill="none" stroke="#d9a52e" stroke-width="0.8"/><path d="M0.5 4.8H5.5V2.8L9 6L5.5 9.2V7.2H0.5Z" fill="#fff" stroke="#7a7a7a" stroke-width="0.7"/></svg>
<div style="position:absolute;top:337px;font-family:'Liberation Sans',sans-serif;font-size:11px;line-height:20px;white-space:pre;color:#222;left:892.6px;transform:scaleX(0.9562);transform-origin:left center;">Export</div>
<svg style="position:absolute;left:930px;top:345px;" width="6" height="4" viewBox="0 0 6 4"><path d="M0.5 0H5.5L3 3.2Z" fill="#222"/></svg>
<div style="position:absolute;left:944px;top:338px;width:1px;height:14px;background:#c6cacd"></div>
<div style="position:absolute;left:957px;top:340px;width:11px;height:13px;background:#fff;border:1px solid #e9ecee"></div>
<svg style="position:absolute;left:950px;top:338px;" width="12" height="12" viewBox="0 0 12 12"><circle cx="6" cy="6" r="5.3" fill="#e8a6a6"/><path d="M3.8 3.8L8.2 8.2M8.2 3.8L3.8 8.2" stroke="#fff" stroke-width="1.8"/></svg>
<div style="position:absolute;left:975px;top:338px;width:1px;height:14px;background:#c6cacd"></div>
<svg style="position:absolute;left:982px;top:337px;" width="18" height="17" viewBox="0 0 18 17"><ellipse cx="11" cy="15.2" rx="6" ry="1.1" fill="#808080" opacity="0.12"/><path d="M16.5 1.5L12.5 5.5" stroke="#e3d6cf" stroke-width="2.2" stroke-linecap="round"/><path d="M10.2 3.8L13.8 7.4L7.8 15.6Q4 15.4 1.2 9.6Z" fill="#eee6cf"/><path d="M7.6 5.6L11.8 9.8M6.4 7L10.6 11.2" stroke="#ddd0b0" stroke-width="1"/></svg>
<svg style="position:absolute;left:1337px;top:338px;" width="16" height="16" viewBox="0 0 16 16"><path d="M12.3 11.6A5.6 5.6 0 1 1 10.6 4.2" fill="none" stroke="#dfe4ea" stroke-width="4.4"/><path d="M12.3 11.6A5.6 5.6 0 1 1 10.6 4.2" fill="none" stroke="#f0f3f7" stroke-width="2.4"/><path d="M9 2.5H14.5V7.5Z" fill="#f0f3f7" stroke="#dfe4ea" stroke-width="1"/></svg>
</body></html>
